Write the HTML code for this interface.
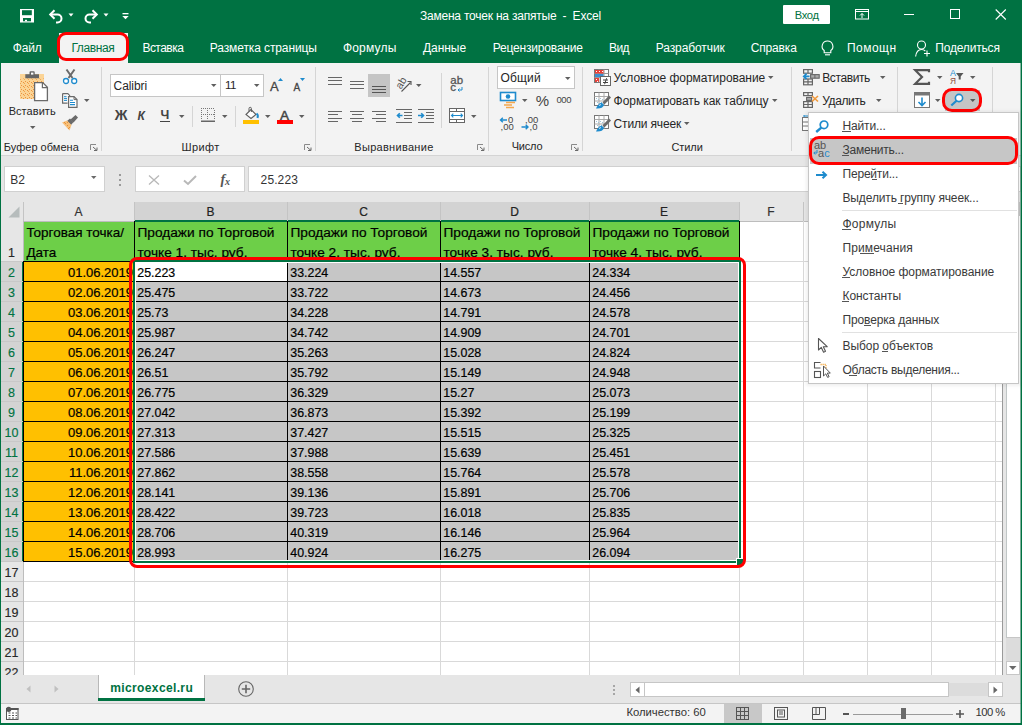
<!DOCTYPE html><html><head><meta charset="utf-8"><style>
html,body{margin:0;padding:0;width:1022px;height:725px;overflow:hidden;position:relative;font-family:"Liberation Sans",sans-serif}
svg{overflow:visible}
</style></head><body>
<div style="position:absolute;left:0px;top:0px;width:1022px;height:725px;background:#e6e6e6"></div>
<div style="position:absolute;left:0px;top:0px;width:1022px;height:63px;background:#007242"></div>
<div style="position:absolute;left:1px;top:63px;width:1020px;height:92px;background:#f3f3f3"></div>
<div style="position:absolute;left:1px;top:155px;width:1020px;height:1px;background:#d4d4d4"></div>
<svg style="position:absolute;left:20px;top:9px;" width="14" height="14" viewBox="0 0 14 14"><rect x="0" y="0" width="14" height="13.5" fill="#fff"/><rect x="2" y="1.2" width="9.8" height="5" fill="#007242"/><rect x="3" y="9" width="8" height="3.3" fill="#007242"/><rect x="5" y="10.8" width="2" height="1.5" fill="#fff"/></svg>
<svg style="position:absolute;left:48px;top:8px;" width="16" height="15" viewBox="0 0 16 15"><path d="M2.5 6.5h7a4 4 0 0 1 0 8h-1.5" fill="none" stroke="#fff" stroke-width="2"/><path d="M6.5 2.2L2.2 6.5L6.5 10.8" fill="none" stroke="#fff" stroke-width="2"/></svg>
<svg style="position:absolute;left:68px;top:13px;" width="6" height="5" viewBox="0 0 6 5"><path d="M0.5 0.5h5l-2.5 3z" fill="#fff"/></svg>
<svg style="position:absolute;left:83px;top:8px;" width="16" height="15" viewBox="0 0 16 15"><path d="M13.5 6.5h-7a4 4 0 0 0 0 8h1.5" fill="none" stroke="#fff" stroke-width="2"/><path d="M9.5 2.2L13.8 6.5L9.5 10.8" fill="none" stroke="#fff" stroke-width="2"/></svg>
<svg style="position:absolute;left:103px;top:13px;" width="6" height="5" viewBox="0 0 6 5"><path d="M0.5 0.5h5l-2.5 3z" fill="#fff"/></svg>
<svg style="position:absolute;left:122px;top:12px;" width="7" height="8" viewBox="0 0 7 8"><rect x="0.5" y="1" width="6" height="1.3" fill="#fff"/><path d="M0.3 4h6.4l-3.2 3.2z" fill="#fff"/></svg>
<div style="position:absolute;left:419.9px;top:10px;font-family:'Liberation Sans',sans-serif;font-size:12px;line-height:12px;letter-spacing:-0.213px;font-weight:400;color:#fff;white-space:pre;">Замена точек на запятые  -  Excel</div>
<div style="position:absolute;left:783px;top:5px;width:47px;height:19px;background:#fff;border-radius:1px"></div>
<div style="position:absolute;left:794.7px;top:10px;font-family:'Liberation Sans',sans-serif;font-size:11.2px;line-height:11.2px;letter-spacing:-0.335px;font-weight:400;color:#007242;white-space:pre;">Вход</div>
<svg style="position:absolute;left:855px;top:9px;" width="15" height="11" viewBox="0 0 15 11"><rect x="0.5" y="0.5" width="13" height="9.5" fill="none" stroke="#fff"/><path d="M1 2.5h12" stroke="#fff"/><path d="M7 9V4.5M5 6.5l2-2 2 2" fill="none" stroke="#fff"/></svg>
<div style="position:absolute;left:904px;top:14px;width:10px;height:1px;background:#fff"></div>
<div style="position:absolute;left:950px;top:9px;width:10px;height:10px;border:1px solid #fff;box-sizing:border-box"></div>
<svg style="position:absolute;left:995px;top:9px;" width="12" height="11" viewBox="0 0 12 11"><path d="M0.7 0.5L10.8 10.5M10.8 0.5L0.7 10.5" stroke="#fff" stroke-width="1.1"/></svg>
<div style="position:absolute;left:12.7px;top:42px;font-family:'Liberation Sans',sans-serif;font-size:12px;line-height:12px;letter-spacing:-0.126px;font-weight:400;color:#fff;white-space:pre;">Файл</div>
<div style="position:absolute;left:142.4px;top:42px;font-family:'Liberation Sans',sans-serif;font-size:12px;line-height:12px;letter-spacing:-0.515px;font-weight:400;color:#fff;white-space:pre;">Вставка</div>
<div style="position:absolute;left:209.8px;top:42px;font-family:'Liberation Sans',sans-serif;font-size:12px;line-height:12px;letter-spacing:-0.11px;font-weight:400;color:#fff;white-space:pre;">Разметка страницы</div>
<div style="position:absolute;left:342.9px;top:42px;font-family:'Liberation Sans',sans-serif;font-size:12px;line-height:12px;letter-spacing:0.197px;font-weight:400;color:#fff;white-space:pre;">Формулы</div>
<div style="position:absolute;left:423px;top:42px;font-family:'Liberation Sans',sans-serif;font-size:12px;line-height:12px;letter-spacing:-0.059px;font-weight:400;color:#fff;white-space:pre;">Данные</div>
<div style="position:absolute;left:492.8px;top:42px;font-family:'Liberation Sans',sans-serif;font-size:12px;line-height:12px;letter-spacing:-0.19px;font-weight:400;color:#fff;white-space:pre;">Рецензирование</div>
<div style="position:absolute;left:609px;top:42px;font-family:'Liberation Sans',sans-serif;font-size:12px;line-height:12px;letter-spacing:-0.57px;font-weight:400;color:#fff;white-space:pre;">Вид</div>
<div style="position:absolute;left:655.7px;top:42px;font-family:'Liberation Sans',sans-serif;font-size:12px;line-height:12px;letter-spacing:-0.089px;font-weight:400;color:#fff;white-space:pre;">Разработчик</div>
<div style="position:absolute;left:750.7px;top:42px;font-family:'Liberation Sans',sans-serif;font-size:12px;line-height:12px;letter-spacing:-0.154px;font-weight:400;color:#fff;white-space:pre;">Справка</div>
<div style="position:absolute;left:846.9px;top:42px;font-family:'Liberation Sans',sans-serif;font-size:12px;line-height:12px;letter-spacing:0.479px;font-weight:400;color:#fff;white-space:pre;">Помощн</div>
<div style="position:absolute;left:935.3px;top:42px;font-family:'Liberation Sans',sans-serif;font-size:12px;line-height:12px;letter-spacing:-0.186px;font-weight:400;color:#fff;white-space:pre;">Поделиться</div>
<div style="position:absolute;left:59px;top:33px;width:69px;height:30px;background:#f3f3f3"></div>
<div style="position:absolute;left:71.4px;top:42px;font-family:'Liberation Sans',sans-serif;font-size:12px;line-height:12px;letter-spacing:-0.382px;font-weight:400;color:#007242;white-space:pre;">Главная</div>
<div style="position:absolute;left:57px;top:32px;width:72px;height:29px;border:3px solid #f00;border-radius:9px;box-sizing:border-box"></div>
<svg style="position:absolute;left:821px;top:40px;" width="13" height="17" viewBox="0 0 13 17"><path d="M6.5 1a5.3 5.3 0 0 0-3.3 9.5v2.3h6.6v-2.3A5.3 5.3 0 0 0 6.5 1z" fill="none" stroke="#fff" stroke-width="1.1"/><path d="M4 14.8h5" stroke="#fff" stroke-width="1.1"/></svg>
<svg style="position:absolute;left:915px;top:40px;" width="16" height="17" viewBox="0 0 16 17"><circle cx="6.5" cy="5" r="4" fill="none" stroke="#fff" stroke-width="1.1"/><path d="M0.6 16.5C1.2 12 3.5 9.5 6.5 9.5c1.5 0 2.8 0.5 3.8 1.5" fill="none" stroke="#fff" stroke-width="1.1"/><path d="M12 10.5v6M9 13.5h6" stroke="#fff" stroke-width="1.1"/></svg>
<svg style="position:absolute;left:19px;top:70px;" width="30" height="32" viewBox="0 0 30 32"><defs><pattern id="dots" width="4" height="4" patternUnits="userSpaceOnUse"><rect width="4" height="4" fill="#fbd496"/><rect x="0" y="0" width="1" height="1" fill="#ec9440"/><rect x="1" y="1" width="1" height="1" fill="#f0a552"/><rect x="2" y="3" width="1" height="1" fill="#ec9440"/></pattern></defs>
<rect x="1" y="4" width="24" height="25" fill="url(#dots)"/>
<rect x="1" y="4" width="24" height="4.5" fill="#fbd496"/>
<path d="M6.3 8.2V4.3h4.2V2.2a1 1 0 0 1 1-1h3.2a1 1 0 0 1 1 1V4.3h4.3v3.9z" fill="#666"/>
<rect x="12" y="2.6" width="2.4" height="2" fill="#fff"/>
<path d="M15.6 12.6h8.2l4.6 4.6v13.4h-12.8z" fill="#fff" stroke="#6a6a6a" stroke-width="1.3"/>
<path d="M23.4 12.6v5h5" fill="none" stroke="#6a6a6a" stroke-width="1.2"/></svg>
<div style="position:absolute;left:8.7px;top:106px;font-family:'Liberation Sans',sans-serif;font-size:11px;line-height:11px;letter-spacing:0.047px;font-weight:400;color:#262626;white-space:pre;">Вставить</div>
<svg style="position:absolute;left:30px;top:126px;" width="6" height="4" viewBox="0 0 6 4"><path d="M0 0h5.5l-2.75 3z" fill="#5f5f5f"/></svg>
<svg style="position:absolute;left:62px;top:68px;" width="17" height="17" viewBox="0 0 17 17"><path d="M4.5 1.5L10.5 10M12.5 1.5L6.5 10" stroke="#6a6a6a" stroke-width="2"/><circle cx="4" cy="13" r="2.5" fill="#fff" stroke="#1e8bcd" stroke-width="1.3"/><circle cx="12.2" cy="13" r="2.5" fill="#fff" stroke="#1e8bcd" stroke-width="1.3"/></svg>
<svg style="position:absolute;left:62px;top:93px;" width="16" height="15" viewBox="0 0 16 15"><path d="M0.6 0.6h5.2l1.8 1.8v1.6M0.6 0.6v9.6h5" fill="#fff" stroke="#6a6a6a" stroke-width="1.2"/><path d="M6.6 3.6h5.4l3 3v7.8h-8.4z" fill="#fff" stroke="#6a6a6a" stroke-width="1.2"/><path d="M12 3.6v3h3" fill="none" stroke="#6a6a6a" stroke-width="1"/><path d="M2 3.7h2.5M2 5.6h3M2 7.4h3" stroke="#1e8bcd" stroke-width="1"/><path d="M8 7.2h3M8 9.5h5M8 11.6h5" stroke="#1e8bcd" stroke-width="1.1"/></svg>
<svg style="position:absolute;left:84px;top:99px;" width="6" height="4" viewBox="0 0 6 4"><path d="M0 0h5.5l-2.75 3z" fill="#5f5f5f"/></svg>
<svg style="position:absolute;left:61px;top:114px;" width="18" height="17" viewBox="0 0 18 17"><path d="M9.5 5.5l5-4.5 2.5 2.5-4.5 5z" fill="#6a6a6a"/><path d="M6 7l3-2.5 3.5 3.5-2.5 3z" fill="#6a6a6a"/><path d="M1 8.5l5-2 4.5 4.5-2 5.5z" fill="#f7c07a"/><g fill="#e8913a"><rect x="4" y="9" width="1" height="1"/><rect x="6" y="11" width="1" height="1"/><rect x="8" y="13" width="1" height="1"/><rect x="6" y="8" width="1" height="1"/><rect x="3" y="8" width="1" height="1"/><rect x="7" y="14" width="1" height="1"/></g></svg>
<div style="position:absolute;left:3.8px;top:142px;font-family:'Liberation Sans',sans-serif;font-size:11px;line-height:11px;letter-spacing:0.021px;font-weight:400;color:#262626;white-space:pre;">Буфер обмена</div>
<svg style="position:absolute;left:90px;top:144px;" width="8" height="7" viewBox="0 0 8 7"><path d="M0.5 6V0.5H6" fill="none" stroke="#8a8a8a"/><path d="M3 3l4 3.5M7 3.5v3H4" fill="none" stroke="#6a6a6a"/></svg>
<div style="position:absolute;left:101px;top:67px;width:1px;height:84px;background:#d5d5d5"></div>
<div style="position:absolute;left:110px;top:74px;width:111px;height:23px;background:#fff;border:1px solid #c6c6c6;box-sizing:border-box"></div>
<div style="position:absolute;left:220px;top:74px;width:44px;height:23px;background:#fff;border:1px solid #c6c6c6;box-sizing:border-box"></div>
<div style="position:absolute;left:113.6px;top:80px;font-family:'Liberation Sans',sans-serif;font-size:12px;line-height:12px;letter-spacing:-0.087px;font-weight:400;color:#262626;white-space:pre;">Calibri</div>
<svg style="position:absolute;left:211px;top:84px;" width="6" height="4" viewBox="0 0 6 4"><path d="M0 0h5.5l-2.75 3z" fill="#5f5f5f"/></svg>
<div style="position:absolute;left:225px;top:80px;font-family:'Liberation Sans',sans-serif;font-size:11.5px;line-height:11.5px;letter-spacing:0px;font-weight:400;color:#262626;white-space:pre;letter-spacing:-0.6px">11</div>
<svg style="position:absolute;left:254px;top:84px;" width="6" height="4" viewBox="0 0 6 4"><path d="M0 0h5.5l-2.75 3z" fill="#5f5f5f"/></svg>
<div style="position:absolute;left:270px;top:80px;font-family:'Liberation Sans',sans-serif;font-size:13px;line-height:13px;letter-spacing:0px;font-weight:400;color:#444;white-space:pre;-webkit-text-stroke:0.3px #444">A</div>
<svg style="position:absolute;left:278px;top:78px;" width="6" height="4" viewBox="0 0 6 4"><path d="M0 3h5l-2.5-3z" fill="#1e8bcd"/></svg>
<div style="position:absolute;left:293.5px;top:83px;font-family:'Liberation Sans',sans-serif;font-size:10px;line-height:10px;letter-spacing:0px;font-weight:400;color:#444;white-space:pre;-webkit-text-stroke:0.3px #444">A</div>
<svg style="position:absolute;left:300px;top:78px;" width="6" height="4" viewBox="0 0 6 4"><path d="M0 0h5l-2.5 3z" fill="#1e8bcd"/></svg>
<div style="position:absolute;left:114.7px;top:108px;font-family:'Liberation Sans',sans-serif;font-size:14.05px;line-height:14.05px;letter-spacing:0px;font-weight:700;color:#444;white-space:pre;">Ж</div>
<div style="position:absolute;left:137.5px;top:110px;font-family:'Liberation Sans',sans-serif;font-size:12px;line-height:12px;letter-spacing:0px;font-weight:700;color:#444;white-space:pre;font-style:italic">К</div>
<div style="position:absolute;left:160.4px;top:109px;font-family:'Liberation Sans',sans-serif;font-size:12.5px;line-height:12.5px;letter-spacing:0px;font-weight:700;color:#444;white-space:pre;">Ч</div>
<div style="position:absolute;left:160px;top:121px;width:10px;height:1px;background:#444"></div>
<svg style="position:absolute;left:179px;top:115px;" width="6" height="4" viewBox="0 0 6 4"><path d="M0 0h5.5l-2.75 3z" fill="#5f5f5f"/></svg>
<div style="position:absolute;left:192px;top:106px;width:1px;height:21px;background:#d5d5d5"></div>
<svg style="position:absolute;left:201px;top:108px;" width="14" height="14" viewBox="0 0 14 14"><g fill="#777"><rect x="0" y="0" width="1" height="1"/><rect x="0" y="6" width="1" height="1"/><rect x="2" y="0" width="1" height="1"/><rect x="2" y="6" width="1" height="1"/><rect x="4" y="0" width="1" height="1"/><rect x="4" y="6" width="1" height="1"/><rect x="6" y="0" width="1" height="1"/><rect x="6" y="6" width="1" height="1"/><rect x="8" y="0" width="1" height="1"/><rect x="8" y="6" width="1" height="1"/><rect x="10" y="0" width="1" height="1"/><rect x="10" y="6" width="1" height="1"/><rect x="12" y="0" width="1" height="1"/><rect x="12" y="6" width="1" height="1"/><rect x="0" y="2" width="1" height="1"/><rect x="0" y="4" width="1" height="1"/><rect x="0" y="6" width="1" height="1"/><rect x="0" y="8" width="1" height="1"/><rect x="0" y="10" width="1" height="1"/><rect x="6" y="2" width="1" height="1"/><rect x="6" y="4" width="1" height="1"/><rect x="6" y="6" width="1" height="1"/><rect x="6" y="8" width="1" height="1"/><rect x="6" y="10" width="1" height="1"/><rect x="13" y="2" width="1" height="1"/><rect x="13" y="4" width="1" height="1"/><rect x="13" y="6" width="1" height="1"/><rect x="13" y="8" width="1" height="1"/><rect x="13" y="10" width="1" height="1"/></g><rect x="0" y="12.5" width="14" height="1.5" fill="#666"/></svg>
<svg style="position:absolute;left:222px;top:115px;" width="6" height="4" viewBox="0 0 6 4"><path d="M0 0h5.5l-2.75 3z" fill="#5f5f5f"/></svg>
<div style="position:absolute;left:235px;top:106px;width:1px;height:21px;background:#d5d5d5"></div>
<svg style="position:absolute;left:243.5px;top:107px;" width="15" height="13" viewBox="0 0 15 13"><path d="M2 7.5L7 2.5l5 5-5 4z" fill="#fff" stroke="#5f5f5f" stroke-width="1.1"/><path d="M5 4.5V1.5a1.2 1.2 0 0 1 2.4 0V5" fill="none" stroke="#5f5f5f"/><path d="M12.5 6.5c1.5 1 1.5 3 1 4.5" stroke="#1e8bcd" stroke-width="2" fill="none"/></svg>
<div style="position:absolute;left:243px;top:120px;width:16px;height:4px;background:#ffc000"></div>
<svg style="position:absolute;left:265px;top:115px;" width="6" height="4" viewBox="0 0 6 4"><path d="M0 0h5.5l-2.75 3z" fill="#5f5f5f"/></svg>
<div style="position:absolute;left:280px;top:109px;font-family:'Liberation Sans',sans-serif;font-size:13.5px;line-height:13.5px;letter-spacing:0px;font-weight:400;color:#444;white-space:pre;-webkit-text-stroke:0.5px #444">A</div>
<div style="position:absolute;left:277px;top:120px;width:16px;height:4px;background:#f00"></div>
<svg style="position:absolute;left:299px;top:115px;" width="6" height="4" viewBox="0 0 6 4"><path d="M0 0h5.5l-2.75 3z" fill="#5f5f5f"/></svg>
<div style="position:absolute;left:181.5px;top:142px;font-family:'Liberation Sans',sans-serif;font-size:11px;line-height:11px;letter-spacing:0.402px;font-weight:400;color:#262626;white-space:pre;">Шрифт</div>
<svg style="position:absolute;left:304px;top:144px;" width="8" height="7" viewBox="0 0 8 7"><path d="M0.5 6V0.5H6" fill="none" stroke="#8a8a8a"/><path d="M3 3l4 3.5M7 3.5v3H4" fill="none" stroke="#6a6a6a"/></svg>
<div style="position:absolute;left:315px;top:67px;width:1px;height:84px;background:#d5d5d5"></div>
<div style="position:absolute;left:328px;top:77px;width:14px;height:1px;background:#666"></div>
<div style="position:absolute;left:328px;top:80px;width:14px;height:1px;background:#666"></div>
<div style="position:absolute;left:328px;top:84px;width:14px;height:1px;background:#666"></div>
<div style="position:absolute;left:350px;top:81px;width:14px;height:1px;background:#666"></div>
<div style="position:absolute;left:350px;top:84px;width:14px;height:1px;background:#666"></div>
<div style="position:absolute;left:350px;top:88px;width:14px;height:1px;background:#666"></div>
<div style="position:absolute;left:368px;top:74px;width:22px;height:23px;background:#c5c5c5"></div>
<div style="position:absolute;left:372px;top:86px;width:14px;height:1px;background:#555"></div>
<div style="position:absolute;left:372px;top:89px;width:14px;height:1px;background:#555"></div>
<div style="position:absolute;left:372px;top:92px;width:14px;height:1px;background:#555"></div>
<svg style="position:absolute;left:395px;top:76px;" width="19" height="17" viewBox="0 0 19 17"><text x="0" y="11" font-size="10.5" font-family="Liberation Sans" fill="#555" transform="rotate(-58 5.5 7)">ab</text><path d="M6.5 15.5L15.5 6.5" stroke="#555" stroke-width="1.1"/><path d="M12.5 5.5h3.5v3.5" fill="none" stroke="#555" stroke-width="1.1"/></svg>
<svg style="position:absolute;left:416px;top:84px;" width="6" height="4" viewBox="0 0 6 4"><path d="M0 0h5.5l-2.75 3z" fill="#5f5f5f"/></svg>
<div style="position:absolute;left:441px;top:73px;width:1px;height:55px;background:#d5d5d5"></div>
<div style="position:absolute;left:450.3px;top:75px;font-family:'Liberation Sans',sans-serif;font-size:11.5px;line-height:11.5px;letter-spacing:0px;font-weight:400;color:#555;white-space:pre;-webkit-text-stroke:0.3px #555">ab</div>
<div style="position:absolute;left:450.3px;top:82px;font-family:'Liberation Sans',sans-serif;font-size:11.5px;line-height:11.5px;letter-spacing:0px;font-weight:400;color:#555;white-space:pre;-webkit-text-stroke:0.3px #555">c</div>
<svg style="position:absolute;left:457px;top:87px;" width="6" height="5" viewBox="0 0 6 5"><path d="M5 0v3H1M2.5 1.5L1 3l1.5 1.5" fill="none" stroke="#1e8bcd"/></svg>
<div style="position:absolute;left:328px;top:111px;width:14px;height:1px;background:#666"></div>
<div style="position:absolute;left:328px;top:114px;width:10px;height:1px;background:#666"></div>
<div style="position:absolute;left:328px;top:118px;width:14px;height:1px;background:#666"></div>
<div style="position:absolute;left:328px;top:121px;width:10px;height:1px;background:#666"></div>
<div style="position:absolute;left:350px;top:111px;width:14px;height:1px;background:#666"></div>
<div style="position:absolute;left:352px;top:114px;width:10px;height:1px;background:#666"></div>
<div style="position:absolute;left:350px;top:118px;width:14px;height:1px;background:#666"></div>
<div style="position:absolute;left:352px;top:121px;width:10px;height:1px;background:#666"></div>
<div style="position:absolute;left:372px;top:111px;width:14px;height:1px;background:#666"></div>
<div style="position:absolute;left:376px;top:114px;width:10px;height:1px;background:#666"></div>
<div style="position:absolute;left:372px;top:118px;width:14px;height:1px;background:#666"></div>
<div style="position:absolute;left:376px;top:121px;width:10px;height:1px;background:#666"></div>
<svg style="position:absolute;left:396px;top:109px;" width="16" height="14" viewBox="0 0 16 14"><path d="M0 0.5h16M8 3.5h8M8 6.5h8M8 9.5h8M0 13.5h16" stroke="#666"/><path d="M6.5 6.5H1.5M3.8 4.2L1.5 6.5l2.3 2.3" fill="none" stroke="#1e8bcd" stroke-width="1.6"/></svg>
<svg style="position:absolute;left:418px;top:109px;" width="16" height="14" viewBox="0 0 16 14"><path d="M0 0.5h16M8 3.5h8M8 6.5h8M8 9.5h8M0 13.5h16" stroke="#666"/><path d="M0 6.5h5.5M3.2 4.2L5.5 6.5 3.2 8.8" fill="none" stroke="#1e8bcd" stroke-width="1.6"/></svg>
<svg style="position:absolute;left:449px;top:108px;" width="16" height="15" viewBox="0 0 16 15"><rect x="0.5" y="0.5" width="15" height="14" fill="#fff" stroke="#666"/><path d="M0.5 3.5h15M0.5 11.5h15M7.5 0.5v3M7.5 11.5v3" stroke="#666"/><path d="M2.5 7.5h11M4.3 5.7L2.5 7.5l1.8 1.8M11.7 5.7l1.8 1.8-1.8 1.8" fill="none" stroke="#1e8bcd" stroke-width="1.1"/></svg>
<svg style="position:absolute;left:471px;top:115px;" width="6" height="4" viewBox="0 0 6 4"><path d="M0 0h5.5l-2.75 3z" fill="#5f5f5f"/></svg>
<div style="position:absolute;left:354.3px;top:142px;font-family:'Liberation Sans',sans-serif;font-size:11px;line-height:11px;letter-spacing:0.299px;font-weight:400;color:#262626;white-space:pre;">Выравнивание</div>
<svg style="position:absolute;left:477px;top:144px;" width="8" height="7" viewBox="0 0 8 7"><path d="M0.5 6V0.5H6" fill="none" stroke="#8a8a8a"/><path d="M3 3l4 3.5M7 3.5v3H4" fill="none" stroke="#6a6a6a"/></svg>
<div style="position:absolute;left:488px;top:67px;width:1px;height:84px;background:#d5d5d5"></div>
<div style="position:absolute;left:497px;top:66px;width:78px;height:23px;background:#fff;border:1px solid #c6c6c6;box-sizing:border-box"></div>
<div style="position:absolute;left:500.4px;top:72px;font-family:'Liberation Sans',sans-serif;font-size:12px;line-height:12px;letter-spacing:0.183px;font-weight:400;color:#262626;white-space:pre;">Общий</div>
<svg style="position:absolute;left:565px;top:77px;" width="6" height="4" viewBox="0 0 6 4"><path d="M0 0h5.5l-2.75 3z" fill="#5f5f5f"/></svg>
<svg style="position:absolute;left:500px;top:92px;" width="17" height="17" viewBox="0 0 17 17"><rect x="0.5" y="0.5" width="15" height="8" fill="#fff" stroke="#1e8bcd" stroke-width="1.6"/><circle cx="8" cy="4.5" r="2.3" fill="#1e8bcd"/><path d="M6 10.5h9M4 13h8M6 15.5h8" stroke="#f5a84e" stroke-width="1.4"/></svg>
<svg style="position:absolute;left:522px;top:99px;" width="6" height="4" viewBox="0 0 6 4"><path d="M0 0h5.5l-2.75 3z" fill="#5f5f5f"/></svg>
<div style="position:absolute;left:535.8px;top:93px;font-family:'Liberation Sans',sans-serif;font-size:15px;line-height:15px;letter-spacing:0px;font-weight:400;color:#444;white-space:pre;">%</div>
<div style="position:absolute;left:556.5px;top:95px;font-family:'Liberation Sans',sans-serif;font-size:9.5px;line-height:9.5px;letter-spacing:-0.417px;font-weight:400;color:#444;white-space:pre;">000</div>
<svg style="position:absolute;left:499px;top:115px;" width="17" height="16" viewBox="0 0 17 16"><text x="9" y="8" font-size="9.5" font-family="Liberation Sans" fill="#444">0</text><text x="1.5" y="15" font-size="9.5" font-family="Liberation Sans" fill="#444">,00</text><path d="M8 5H1.5M3.8 2.7L1.5 5l2.3 2.3" fill="none" stroke="#1e8bcd" stroke-width="1.4"/></svg>
<svg style="position:absolute;left:521px;top:115px;" width="17" height="16" viewBox="0 0 17 16"><text x="4" y="8" font-size="9.5" font-family="Liberation Sans" fill="#444">,00</text><text x="8.5" y="15" font-size="9.5" font-family="Liberation Sans" fill="#444">,0</text><path d="M0.5 12h6.5M4.7 9.7L7 12l-2.3 2.3" fill="none" stroke="#1e8bcd" stroke-width="1.4"/></svg>
<div style="position:absolute;left:511.7px;top:141px;font-family:'Liberation Sans',sans-serif;font-size:11px;line-height:11px;letter-spacing:-0.187px;font-weight:400;color:#262626;white-space:pre;">Число</div>
<svg style="position:absolute;left:571px;top:144px;" width="8" height="7" viewBox="0 0 8 7"><path d="M0.5 6V0.5H6" fill="none" stroke="#8a8a8a"/><path d="M3 3l4 3.5M7 3.5v3H4" fill="none" stroke="#6a6a6a"/></svg>
<div style="position:absolute;left:582px;top:67px;width:1px;height:84px;background:#d5d5d5"></div>
<svg style="position:absolute;left:594px;top:69px;" width="17" height="17" viewBox="0 0 17 17"><rect x="0.5" y="0.5" width="14" height="13" fill="#fff" stroke="#777"/>
<path d="M0.5 4.5h14M0.5 8.5h14M5 0.5v13M10 0.5v13" stroke="#999"/>
<rect x="1" y="1" width="8.5" height="3.5" fill="#e8413a"/><g fill="#fff"><rect x="2" y="2" width="1" height="1"/><rect x="5" y="2" width="1" height="1"/><rect x="8" y="2" width="1" height="1"/></g>
<rect x="1" y="5" width="8.5" height="3" fill="#3b8fd0"/>
<rect x="1" y="9" width="4" height="4" fill="#e8413a"/><g fill="#fff"><rect x="2" y="10" width="1" height="1"/><rect x="3" y="12" width="1" height="1"/></g>
<rect x="6.5" y="7.5" width="10" height="9" fill="#fff" stroke="#666"/><path d="M9 11h5M9 13.5h5M12.6 9.2l-2 6" stroke="#444" stroke-width="1"/></svg>
<div style="position:absolute;left:613.6px;top:72px;font-family:'Liberation Sans',sans-serif;font-size:12px;line-height:12px;letter-spacing:-0.046px;font-weight:400;color:#262626;white-space:pre;">Условное форматирование</div>
<svg style="position:absolute;left:768px;top:76px;" width="6" height="4" viewBox="0 0 6 4"><path d="M0 0h5.5l-2.75 3z" fill="#5f5f5f"/></svg>
<svg style="position:absolute;left:594px;top:92px;" width="17" height="17" viewBox="0 0 17 17"><rect x="0.5" y="0.5" width="14" height="13" fill="#fff" stroke="#777"/><path d="M0.5 4.5h14M0.5 9h14M5 0.5v13M10 0.5v13" stroke="#aaa"/>
<g fill="#9fc4d8"><rect x="2" y="6" width="1" height="1"/><rect x="4" y="7" width="1" height="1"/><rect x="6" y="6" width="1" height="1"/><rect x="3" y="10" width="1" height="1"/><rect x="7" y="10" width="1" height="1"/><rect x="8" y="7" width="1" height="1"/></g>
<path d="M8.5 10.5l6.5-7 2 2-6.5 7z" fill="#6a6a6a"/><path d="M2 16.5c1-2.5 2.5-5 5.5-6l2.5 2.3c-1 3-3.5 4-8 3.7z" fill="#1e8bcd"/><path d="M5 13.5l2-1" stroke="#fff" stroke-width="0.8"/></svg>
<svg style="position:absolute;left:594px;top:115px;" width="17" height="17" viewBox="0 0 17 17"><rect x="0.5" y="0.5" width="14" height="13" fill="#fff" stroke="#777"/><path d="M0.5 4.5h14M0.5 9h14M5 0.5v13M10 0.5v13" stroke="#aaa"/>
<g fill="#9fc4d8"><rect x="2" y="6" width="1" height="1"/><rect x="4" y="7" width="1" height="1"/><rect x="6" y="6" width="1" height="1"/><rect x="3" y="10" width="1" height="1"/><rect x="7" y="10" width="1" height="1"/><rect x="8" y="7" width="1" height="1"/></g>
<path d="M8.5 10.5l6.5-7 2 2-6.5 7z" fill="#6a6a6a"/><path d="M2 16.5c1-2.5 2.5-5 5.5-6l2.5 2.3c-1 3-3.5 4-8 3.7z" fill="#1e8bcd"/><path d="M5 13.5l2-1" stroke="#fff" stroke-width="0.8"/></svg>
<div style="position:absolute;left:613.6px;top:95px;font-family:'Liberation Sans',sans-serif;font-size:12px;line-height:12px;letter-spacing:-0.053px;font-weight:400;color:#262626;white-space:pre;">Форматировать как таблицу</div>
<svg style="position:absolute;left:772px;top:99px;" width="6" height="4" viewBox="0 0 6 4"><path d="M0 0h5.5l-2.75 3z" fill="#5f5f5f"/></svg>
<div style="position:absolute;left:613.6px;top:118px;font-family:'Liberation Sans',sans-serif;font-size:12px;line-height:12px;letter-spacing:-0.168px;font-weight:400;color:#262626;white-space:pre;">Стили ячеек</div>
<svg style="position:absolute;left:684px;top:122px;" width="6" height="4" viewBox="0 0 6 4"><path d="M0 0h5.5l-2.75 3z" fill="#5f5f5f"/></svg>
<div style="position:absolute;left:671.5px;top:142px;font-family:'Liberation Sans',sans-serif;font-size:11px;line-height:11px;letter-spacing:-0.098px;font-weight:400;color:#262626;white-space:pre;">Стили</div>
<div style="position:absolute;left:791px;top:67px;width:1px;height:84px;background:#d5d5d5"></div>
<svg style="position:absolute;left:802px;top:68px;" width="18" height="18" viewBox="0 0 18 18"><g fill="none" stroke="#666" stroke-width="1.2"><rect x="1.6" y="1.6" width="8.8" height="3.6"/><path d="M6 1.6v3.6"/><rect x="1.6" y="11" width="8.8" height="5.8"/><path d="M6 11v5.8M1.6 13.9h8.8"/></g>
<rect x="8.6" y="6.6" width="8.6" height="3.6" fill="#aaa" stroke="#666" stroke-width="1.1"/><path d="M12.9 6.6v3.6" stroke="#666"/>
<path d="M7.5 8.4H2M4.6 5.6L1.8 8.4l2.8 2.8" fill="none" stroke="#1e8bcd" stroke-width="1.8"/></svg>
<div style="position:absolute;left:822.2px;top:72px;font-family:'Liberation Sans',sans-serif;font-size:12px;line-height:12px;letter-spacing:-0.383px;font-weight:400;color:#262626;white-space:pre;">Вставить</div>
<svg style="position:absolute;left:880px;top:76px;" width="6" height="4" viewBox="0 0 6 4"><path d="M0 0h5.5l-2.75 3z" fill="#5f5f5f"/></svg>
<svg style="position:absolute;left:802px;top:91px;" width="18" height="18" viewBox="0 0 18 18"><g fill="none" stroke="#666" stroke-width="1.2"><rect x="1.6" y="1.6" width="8.8" height="3"/><path d="M6 1.6v3"/><rect x="1.6" y="10.6" width="8.8" height="5.8"/><path d="M6 10.6v5.8M1.6 13.5h8.8"/></g>
<rect x="4.6" y="6.4" width="5" height="3" fill="#aaa" stroke="#666" stroke-width="1.1"/>
<path d="M10 5l6 5.5M16 5l-6 5.5" stroke="#f0983a" stroke-width="1.6"/></svg>
<div style="position:absolute;left:822.2px;top:95px;font-family:'Liberation Sans',sans-serif;font-size:12px;line-height:12px;letter-spacing:-0.374px;font-weight:400;color:#262626;white-space:pre;">Удалить</div>
<svg style="position:absolute;left:876px;top:99px;" width="6" height="4" viewBox="0 0 6 4"><path d="M0 0h5.5l-2.75 3z" fill="#5f5f5f"/></svg>
<svg style="position:absolute;left:802px;top:115px;" width="18" height="16" viewBox="0 0 18 16"><rect x="0.5" y="2.5" width="14" height="13" fill="#fff" stroke="#777"/><path d="M0.5 7h14M0.5 11h14M7 2.5v13" stroke="#777"/><path d="M2 1h5M2 0v2M7 0v2" stroke="#1e8bcd"/></svg>
<div style="position:absolute;left:897px;top:67px;width:1px;height:84px;background:#d5d5d5"></div>
<svg style="position:absolute;left:914px;top:69px;" width="16" height="16" viewBox="0 0 16 16"><path d="M15 3.2V1.2H1.2L8 8 1.2 14.8H15v-2" fill="none" stroke="#555" stroke-width="2.2" stroke-linejoin="miter"/></svg>
<svg style="position:absolute;left:937px;top:76px;" width="6" height="4" viewBox="0 0 6 4"><path d="M0 0h5.5l-2.75 3z" fill="#5f5f5f"/></svg>
<div style="position:absolute;left:950px;top:69px;font-family:'Liberation Sans',sans-serif;font-size:9.0px;line-height:9.0px;letter-spacing:0px;font-weight:400;color:#1e8bcd;white-space:pre;">A</div>
<div style="position:absolute;left:950px;top:77px;font-family:'Liberation Sans',sans-serif;font-size:8.31px;line-height:8.31px;letter-spacing:0px;font-weight:400;color:#8b4a3a;white-space:pre;">Я</div>
<svg style="position:absolute;left:956px;top:73px;" width="8" height="7" viewBox="0 0 8 7"><path d="M0 0h7.5l-2.8 3.5v3h-2v-3z" fill="#555"/></svg>
<svg style="position:absolute;left:970px;top:76px;" width="6" height="4" viewBox="0 0 6 4"><path d="M0 0h5.5l-2.75 3z" fill="#5f5f5f"/></svg>
<svg style="position:absolute;left:914px;top:92px;" width="16" height="16" viewBox="0 0 16 16"><rect x="0.5" y="0.5" width="15" height="15" fill="#fff" stroke="#777"/><rect x="0.5" y="0.5" width="15" height="3" fill="#777"/><path d="M8 5.5v8M4.5 10L8 13.5 11.5 10" fill="none" stroke="#1e8bcd" stroke-width="1.6"/></svg>
<svg style="position:absolute;left:935px;top:99px;" width="6" height="4" viewBox="0 0 6 4"><path d="M0 0h5.5l-2.75 3z" fill="#5f5f5f"/></svg>
<div style="position:absolute;left:945px;top:90px;width:35px;height:21px;background:#c5c5c5"></div>
<svg style="position:absolute;left:950px;top:92px;" width="14" height="15" viewBox="0 0 14 15"><circle cx="9" cy="6" r="3.6" fill="#fff" stroke="#1e8bcd" stroke-width="1.6"/><path d="M6.5 8.8L1.3 13.5" stroke="#1e8bcd" stroke-width="2.2"/></svg>
<svg style="position:absolute;left:970px;top:99px;" width="6" height="4" viewBox="0 0 6 4"><path d="M0 0h5.5l-2.75 3z" fill="#555"/></svg>
<div style="position:absolute;left:942px;top:88px;width:40px;height:24px;border:3px solid #f00;border-radius:10px;box-sizing:border-box"></div>
<div style="position:absolute;left:992px;top:67px;width:1px;height:84px;background:#d5d5d5"></div>
<div style="position:absolute;left:1px;top:156px;width:1020px;height:46px;background:#e6e6e6"></div>
<div style="position:absolute;left:3.5px;top:166px;width:101px;height:26px;background:#fff;border:1px solid #d0d0d0;box-sizing:border-box"></div>
<div style="position:absolute;left:10.3px;top:174px;font-family:'Liberation Sans',sans-serif;font-size:12px;line-height:12px;letter-spacing:0.01px;font-weight:400;color:#333;white-space:pre;">B2</div>
<svg style="position:absolute;left:91px;top:176px;" width="6" height="4" viewBox="0 0 6 4"><path d="M0 0h5.5l-2.75 3z" fill="#6a6a6a"/></svg>
<div style="position:absolute;left:119px;top:174px;width:2px;height:2px;background:#9a9a9a"></div>
<div style="position:absolute;left:119px;top:179px;width:2px;height:2px;background:#9a9a9a"></div>
<div style="position:absolute;left:119px;top:184px;width:2px;height:2px;background:#9a9a9a"></div>
<div style="position:absolute;left:135px;top:166px;width:110px;height:26px;background:#fff;border:1px solid #d0d0d0;box-sizing:border-box"></div>
<svg style="position:absolute;left:148px;top:175px;" width="12" height="10" viewBox="0 0 12 10"><path d="M1 0.5l10 9M11 0.5l-10 9" stroke="#b8b8b8" stroke-width="1.3"/></svg>
<svg style="position:absolute;left:183px;top:175px;" width="14" height="10" viewBox="0 0 14 10"><path d="M1 5.5l4 3.5L13 1" fill="none" stroke="#b8b8b8" stroke-width="2"/></svg>
<div style="position:absolute;left:220.5px;top:173px;font-family:'Liberation Serif',serif;font-size:14px;line-height:14px;letter-spacing:0px;font-weight:700;color:#555;white-space:pre;"><i>f</i></div>
<div style="position:absolute;left:225px;top:177px;font-family:'Liberation Serif',serif;font-size:10px;line-height:10px;letter-spacing:0px;font-weight:700;color:#555;white-space:pre;"><i>x</i></div>
<div style="position:absolute;left:248px;top:166px;width:773px;height:26px;background:#fff;border:1px solid #d0d0d0;box-sizing:border-box"></div>
<div style="position:absolute;left:260.6px;top:174px;font-family:'Liberation Sans',sans-serif;font-size:12px;line-height:12px;letter-spacing:0.116px;font-weight:400;color:#333;white-space:pre;">25.223</div>
<div style="position:absolute;left:1px;top:202px;width:1002px;height:473px;background:#fff"></div>
<div style="position:absolute;left:1px;top:202px;width:1002px;height:19px;background:#e6e6e6"></div>
<div style="position:absolute;left:135px;top:202px;width:604px;height:19px;background:#d3d3d3"></div>
<div style="position:absolute;left:1px;top:221px;width:1002px;height:1px;background:#bdbdbd"></div>
<div style="position:absolute;left:134px;top:220px;width:606px;height:2px;background:#007242"></div>
<div style="position:absolute;left:134px;top:202px;width:1px;height:19px;background:#c4c4c4"></div>
<div style="position:absolute;left:287px;top:202px;width:1px;height:19px;background:#c4c4c4"></div>
<div style="position:absolute;left:440px;top:202px;width:1px;height:19px;background:#c4c4c4"></div>
<div style="position:absolute;left:589px;top:202px;width:1px;height:19px;background:#c4c4c4"></div>
<div style="position:absolute;left:739px;top:202px;width:1px;height:19px;background:#c4c4c4"></div>
<div style="position:absolute;left:803px;top:202px;width:1px;height:19px;background:#c4c4c4"></div>
<div style="position:absolute;left:867px;top:202px;width:1px;height:19px;background:#c4c4c4"></div>
<div style="position:absolute;left:931px;top:202px;width:1px;height:19px;background:#c4c4c4"></div>
<div style="position:absolute;left:995px;top:202px;width:1px;height:19px;background:#c4c4c4"></div>
<svg style="position:absolute;left:8px;top:206px;" width="12" height="12" viewBox="0 0 12 12"><path d="M11.5 0.5V11.5H0.5z" fill="#b6bcbc"/></svg>
<div style="position:absolute;left:23px;top:202px;width:1px;height:19px;background:#c4c4c4"></div>
<div style="position:absolute;left:58.5px;top:206px;width:40px;text-align:center;font-size:12px;line-height:12px;color:#333;font-family:'Liberation Sans';-webkit-text-stroke:0.2px #333">A</div>
<div style="position:absolute;left:190.5px;top:206px;width:40px;text-align:center;font-size:12px;line-height:12px;color:#222;font-family:'Liberation Sans';-webkit-text-stroke:0.2px #222">B</div>
<div style="position:absolute;left:343.5px;top:206px;width:40px;text-align:center;font-size:12px;line-height:12px;color:#222;font-family:'Liberation Sans';-webkit-text-stroke:0.2px #222">C</div>
<div style="position:absolute;left:494.5px;top:206px;width:40px;text-align:center;font-size:12px;line-height:12px;color:#222;font-family:'Liberation Sans';-webkit-text-stroke:0.2px #222">D</div>
<div style="position:absolute;left:644.0px;top:206px;width:40px;text-align:center;font-size:12px;line-height:12px;color:#222;font-family:'Liberation Sans';-webkit-text-stroke:0.2px #222">E</div>
<div style="position:absolute;left:751.0px;top:206px;width:40px;text-align:center;font-size:12px;line-height:12px;color:#333;font-family:'Liberation Sans';-webkit-text-stroke:0.2px #333">F</div>
<div style="position:absolute;left:815.0px;top:206px;width:40px;text-align:center;font-size:12px;line-height:12px;color:#333;font-family:'Liberation Sans';-webkit-text-stroke:0.2px #333">G</div>
<div style="position:absolute;left:879.0px;top:206px;width:40px;text-align:center;font-size:12px;line-height:12px;color:#333;font-family:'Liberation Sans';-webkit-text-stroke:0.2px #333">H</div>
<div style="position:absolute;left:943.0px;top:206px;width:40px;text-align:center;font-size:12px;line-height:12px;color:#333;font-family:'Liberation Sans';-webkit-text-stroke:0.2px #333">I</div>
<div style="position:absolute;left:1007.0px;top:206px;width:40px;text-align:center;font-size:12px;line-height:12px;color:#333;font-family:'Liberation Sans';-webkit-text-stroke:0.2px #333">J</div>
<div style="position:absolute;left:1px;top:221px;width:22px;height:454px;background:#e6e6e6"></div>
<div style="position:absolute;left:1px;top:261px;width:22px;height:300px;background:#d3d3d3"></div>
<div style="position:absolute;left:23px;top:221px;width:1px;height:454px;background:#bdbdbd"></div>
<div style="position:absolute;left:22px;top:261px;width:2px;height:300px;background:#007242"></div>
<div style="position:absolute;left:1px;top:261px;width:22px;height:1px;background:#c8c8c8"></div>
<div style="position:absolute;left:1px;top:281px;width:22px;height:1px;background:#c8c8c8"></div>
<div style="position:absolute;left:1px;top:301px;width:22px;height:1px;background:#c8c8c8"></div>
<div style="position:absolute;left:1px;top:321px;width:22px;height:1px;background:#c8c8c8"></div>
<div style="position:absolute;left:1px;top:341px;width:22px;height:1px;background:#c8c8c8"></div>
<div style="position:absolute;left:1px;top:361px;width:22px;height:1px;background:#c8c8c8"></div>
<div style="position:absolute;left:1px;top:381px;width:22px;height:1px;background:#c8c8c8"></div>
<div style="position:absolute;left:1px;top:401px;width:22px;height:1px;background:#c8c8c8"></div>
<div style="position:absolute;left:1px;top:421px;width:22px;height:1px;background:#c8c8c8"></div>
<div style="position:absolute;left:1px;top:441px;width:22px;height:1px;background:#c8c8c8"></div>
<div style="position:absolute;left:1px;top:461px;width:22px;height:1px;background:#c8c8c8"></div>
<div style="position:absolute;left:1px;top:481px;width:22px;height:1px;background:#c8c8c8"></div>
<div style="position:absolute;left:1px;top:501px;width:22px;height:1px;background:#c8c8c8"></div>
<div style="position:absolute;left:1px;top:521px;width:22px;height:1px;background:#c8c8c8"></div>
<div style="position:absolute;left:1px;top:541px;width:22px;height:1px;background:#c8c8c8"></div>
<div style="position:absolute;left:1px;top:561px;width:22px;height:1px;background:#c8c8c8"></div>
<div style="position:absolute;left:1px;top:581px;width:22px;height:1px;background:#c8c8c8"></div>
<div style="position:absolute;left:1px;top:601px;width:22px;height:1px;background:#c8c8c8"></div>
<div style="position:absolute;left:1px;top:621px;width:22px;height:1px;background:#c8c8c8"></div>
<div style="position:absolute;left:1px;top:641px;width:22px;height:1px;background:#c8c8c8"></div>
<div style="position:absolute;left:1px;top:661px;width:22px;height:1px;background:#c8c8c8"></div>
<div style="position:absolute;left:0.5px;top:247px;width:22px;text-align:center;font-size:12.5px;line-height:12.5px;color:#262626;font-family:'Liberation Sans';-webkit-text-stroke:0.15px #262626">1</div>
<div style="position:absolute;left:0.5px;top:267px;width:22px;text-align:center;font-size:12.5px;line-height:12.5px;color:#007242;font-family:'Liberation Sans';-webkit-text-stroke:0.15px #007242">2</div>
<div style="position:absolute;left:0.5px;top:287px;width:22px;text-align:center;font-size:12.5px;line-height:12.5px;color:#007242;font-family:'Liberation Sans';-webkit-text-stroke:0.15px #007242">3</div>
<div style="position:absolute;left:0.5px;top:307px;width:22px;text-align:center;font-size:12.5px;line-height:12.5px;color:#007242;font-family:'Liberation Sans';-webkit-text-stroke:0.15px #007242">4</div>
<div style="position:absolute;left:0.5px;top:327px;width:22px;text-align:center;font-size:12.5px;line-height:12.5px;color:#007242;font-family:'Liberation Sans';-webkit-text-stroke:0.15px #007242">5</div>
<div style="position:absolute;left:0.5px;top:347px;width:22px;text-align:center;font-size:12.5px;line-height:12.5px;color:#007242;font-family:'Liberation Sans';-webkit-text-stroke:0.15px #007242">6</div>
<div style="position:absolute;left:0.5px;top:367px;width:22px;text-align:center;font-size:12.5px;line-height:12.5px;color:#007242;font-family:'Liberation Sans';-webkit-text-stroke:0.15px #007242">7</div>
<div style="position:absolute;left:0.5px;top:387px;width:22px;text-align:center;font-size:12.5px;line-height:12.5px;color:#007242;font-family:'Liberation Sans';-webkit-text-stroke:0.15px #007242">8</div>
<div style="position:absolute;left:0.5px;top:407px;width:22px;text-align:center;font-size:12.5px;line-height:12.5px;color:#007242;font-family:'Liberation Sans';-webkit-text-stroke:0.15px #007242">9</div>
<div style="position:absolute;left:0.5px;top:427px;width:22px;text-align:center;font-size:12.5px;line-height:12.5px;color:#007242;font-family:'Liberation Sans';-webkit-text-stroke:0.15px #007242">10</div>
<div style="position:absolute;left:0.5px;top:447px;width:22px;text-align:center;font-size:12.5px;line-height:12.5px;color:#007242;font-family:'Liberation Sans';-webkit-text-stroke:0.15px #007242">11</div>
<div style="position:absolute;left:0.5px;top:467px;width:22px;text-align:center;font-size:12.5px;line-height:12.5px;color:#007242;font-family:'Liberation Sans';-webkit-text-stroke:0.15px #007242">12</div>
<div style="position:absolute;left:0.5px;top:487px;width:22px;text-align:center;font-size:12.5px;line-height:12.5px;color:#007242;font-family:'Liberation Sans';-webkit-text-stroke:0.15px #007242">13</div>
<div style="position:absolute;left:0.5px;top:507px;width:22px;text-align:center;font-size:12.5px;line-height:12.5px;color:#007242;font-family:'Liberation Sans';-webkit-text-stroke:0.15px #007242">14</div>
<div style="position:absolute;left:0.5px;top:527px;width:22px;text-align:center;font-size:12.5px;line-height:12.5px;color:#007242;font-family:'Liberation Sans';-webkit-text-stroke:0.15px #007242">15</div>
<div style="position:absolute;left:0.5px;top:547px;width:22px;text-align:center;font-size:12.5px;line-height:12.5px;color:#007242;font-family:'Liberation Sans';-webkit-text-stroke:0.15px #007242">16</div>
<div style="position:absolute;left:0.5px;top:567px;width:22px;text-align:center;font-size:12.5px;line-height:12.5px;color:#262626;font-family:'Liberation Sans';-webkit-text-stroke:0.15px #262626">17</div>
<div style="position:absolute;left:0.5px;top:587px;width:22px;text-align:center;font-size:12.5px;line-height:12.5px;color:#262626;font-family:'Liberation Sans';-webkit-text-stroke:0.15px #262626">18</div>
<div style="position:absolute;left:0.5px;top:607px;width:22px;text-align:center;font-size:12.5px;line-height:12.5px;color:#262626;font-family:'Liberation Sans';-webkit-text-stroke:0.15px #262626">19</div>
<div style="position:absolute;left:0.5px;top:627px;width:22px;text-align:center;font-size:12.5px;line-height:12.5px;color:#262626;font-family:'Liberation Sans';-webkit-text-stroke:0.15px #262626">20</div>
<div style="position:absolute;left:0.5px;top:647px;width:22px;text-align:center;font-size:12.5px;line-height:12.5px;color:#262626;font-family:'Liberation Sans';-webkit-text-stroke:0.15px #262626">21</div>
<div style="position:absolute;left:0.5px;top:667px;width:22px;text-align:center;font-size:12.5px;line-height:12.5px;color:#262626;font-family:'Liberation Sans';-webkit-text-stroke:0.15px #262626">22</div>
<div style="position:absolute;left:134px;top:221px;width:1px;height:454px;background:#d9d9d9"></div>
<div style="position:absolute;left:287px;top:221px;width:1px;height:454px;background:#d9d9d9"></div>
<div style="position:absolute;left:440px;top:221px;width:1px;height:454px;background:#d9d9d9"></div>
<div style="position:absolute;left:589px;top:221px;width:1px;height:454px;background:#d9d9d9"></div>
<div style="position:absolute;left:739px;top:221px;width:1px;height:454px;background:#d9d9d9"></div>
<div style="position:absolute;left:803px;top:221px;width:1px;height:454px;background:#d9d9d9"></div>
<div style="position:absolute;left:867px;top:221px;width:1px;height:454px;background:#d9d9d9"></div>
<div style="position:absolute;left:931px;top:221px;width:1px;height:454px;background:#d9d9d9"></div>
<div style="position:absolute;left:995px;top:221px;width:1px;height:454px;background:#d9d9d9"></div>
<div style="position:absolute;left:1059px;top:221px;width:1px;height:454px;background:#d9d9d9"></div>
<div style="position:absolute;left:24px;top:261px;width:979px;height:1px;background:#d9d9d9"></div>
<div style="position:absolute;left:24px;top:281px;width:979px;height:1px;background:#d9d9d9"></div>
<div style="position:absolute;left:24px;top:301px;width:979px;height:1px;background:#d9d9d9"></div>
<div style="position:absolute;left:24px;top:321px;width:979px;height:1px;background:#d9d9d9"></div>
<div style="position:absolute;left:24px;top:341px;width:979px;height:1px;background:#d9d9d9"></div>
<div style="position:absolute;left:24px;top:361px;width:979px;height:1px;background:#d9d9d9"></div>
<div style="position:absolute;left:24px;top:381px;width:979px;height:1px;background:#d9d9d9"></div>
<div style="position:absolute;left:24px;top:401px;width:979px;height:1px;background:#d9d9d9"></div>
<div style="position:absolute;left:24px;top:421px;width:979px;height:1px;background:#d9d9d9"></div>
<div style="position:absolute;left:24px;top:441px;width:979px;height:1px;background:#d9d9d9"></div>
<div style="position:absolute;left:24px;top:461px;width:979px;height:1px;background:#d9d9d9"></div>
<div style="position:absolute;left:24px;top:481px;width:979px;height:1px;background:#d9d9d9"></div>
<div style="position:absolute;left:24px;top:501px;width:979px;height:1px;background:#d9d9d9"></div>
<div style="position:absolute;left:24px;top:521px;width:979px;height:1px;background:#d9d9d9"></div>
<div style="position:absolute;left:24px;top:541px;width:979px;height:1px;background:#d9d9d9"></div>
<div style="position:absolute;left:24px;top:561px;width:979px;height:1px;background:#d9d9d9"></div>
<div style="position:absolute;left:24px;top:581px;width:979px;height:1px;background:#d9d9d9"></div>
<div style="position:absolute;left:24px;top:601px;width:979px;height:1px;background:#d9d9d9"></div>
<div style="position:absolute;left:24px;top:621px;width:979px;height:1px;background:#d9d9d9"></div>
<div style="position:absolute;left:24px;top:641px;width:979px;height:1px;background:#d9d9d9"></div>
<div style="position:absolute;left:24px;top:661px;width:979px;height:1px;background:#d9d9d9"></div>
<div style="position:absolute;left:24px;top:222px;width:715px;height:39px;background:#6dcf48"></div>
<div style="position:absolute;left:24px;top:262px;width:110px;height:299px;background:#ffc000"></div>
<div style="position:absolute;left:135px;top:262px;width:604px;height:299px;background:#c6c6c6"></div>
<div style="position:absolute;left:135px;top:262px;width:152px;height:19px;background:#fff"></div>
<div style="position:absolute;left:23px;top:261px;width:717px;height:1px;background:#000"></div>
<div style="position:absolute;left:23px;top:281px;width:717px;height:1px;background:#000"></div>
<div style="position:absolute;left:23px;top:301px;width:717px;height:1px;background:#000"></div>
<div style="position:absolute;left:23px;top:321px;width:717px;height:1px;background:#000"></div>
<div style="position:absolute;left:23px;top:341px;width:717px;height:1px;background:#000"></div>
<div style="position:absolute;left:23px;top:361px;width:717px;height:1px;background:#000"></div>
<div style="position:absolute;left:23px;top:381px;width:717px;height:1px;background:#000"></div>
<div style="position:absolute;left:23px;top:401px;width:717px;height:1px;background:#000"></div>
<div style="position:absolute;left:23px;top:421px;width:717px;height:1px;background:#000"></div>
<div style="position:absolute;left:23px;top:441px;width:717px;height:1px;background:#000"></div>
<div style="position:absolute;left:23px;top:461px;width:717px;height:1px;background:#000"></div>
<div style="position:absolute;left:23px;top:481px;width:717px;height:1px;background:#000"></div>
<div style="position:absolute;left:23px;top:501px;width:717px;height:1px;background:#000"></div>
<div style="position:absolute;left:23px;top:521px;width:717px;height:1px;background:#000"></div>
<div style="position:absolute;left:23px;top:541px;width:717px;height:1px;background:#000"></div>
<div style="position:absolute;left:23px;top:561px;width:717px;height:1px;background:#000"></div>
<div style="position:absolute;left:134px;top:221px;width:1px;height:340px;background:#000"></div>
<div style="position:absolute;left:287px;top:221px;width:1px;height:340px;background:#000"></div>
<div style="position:absolute;left:440px;top:221px;width:1px;height:340px;background:#000"></div>
<div style="position:absolute;left:589px;top:221px;width:1px;height:340px;background:#000"></div>
<div style="position:absolute;left:739px;top:221px;width:1px;height:340px;background:#000"></div>
<div style="position:absolute;left:23px;top:261px;width:1px;height:300px;background:#000"></div>
<div style="position:absolute;left:24px;top:221px;width:110px;height:40px;overflow:hidden"><div style="position:absolute;left:2.4px;top:5px;font-family:'Liberation Sans',sans-serif;font-size:13.5px;line-height:13.5px;color:#000;white-space:pre;-webkit-text-stroke:0.2px #000">Торговая точка/</div><div style="position:absolute;left:2.4px;top:25px;font-family:'Liberation Sans',sans-serif;font-size:13.5px;line-height:13.5px;color:#000;white-space:pre;-webkit-text-stroke:0.2px #000">Дата</div></div>
<div style="position:absolute;left:135px;top:221px;width:152px;height:40px;overflow:hidden"><div style="position:absolute;left:2.5px;top:5px;font-family:'Liberation Sans',sans-serif;font-size:13.7px;line-height:13.7px;color:#000;white-space:pre;-webkit-text-stroke:0.2px #000">Продажи по Торговой</div><div style="position:absolute;left:2.5px;top:25px;font-family:'Liberation Sans',sans-serif;font-size:13.7px;line-height:13.7px;color:#000;white-space:pre;-webkit-text-stroke:0.2px #000">точке 1, тыс. руб.</div></div>
<div style="position:absolute;left:288px;top:221px;width:152px;height:40px;overflow:hidden"><div style="position:absolute;left:2.5px;top:5px;font-family:'Liberation Sans',sans-serif;font-size:13.7px;line-height:13.7px;color:#000;white-space:pre;-webkit-text-stroke:0.2px #000">Продажи по Торговой</div><div style="position:absolute;left:2.5px;top:25px;font-family:'Liberation Sans',sans-serif;font-size:13.7px;line-height:13.7px;color:#000;white-space:pre;-webkit-text-stroke:0.2px #000">точке 2, тыс. руб.</div></div>
<div style="position:absolute;left:441px;top:221px;width:148px;height:40px;overflow:hidden"><div style="position:absolute;left:2.5px;top:5px;font-family:'Liberation Sans',sans-serif;font-size:13.7px;line-height:13.7px;color:#000;white-space:pre;-webkit-text-stroke:0.2px #000">Продажи по Торговой</div><div style="position:absolute;left:2.5px;top:25px;font-family:'Liberation Sans',sans-serif;font-size:13.7px;line-height:13.7px;color:#000;white-space:pre;-webkit-text-stroke:0.2px #000">точке 3, тыс. руб.</div></div>
<div style="position:absolute;left:590px;top:221px;width:149px;height:40px;overflow:hidden"><div style="position:absolute;left:2.5px;top:5px;font-family:'Liberation Sans',sans-serif;font-size:13.7px;line-height:13.7px;color:#000;white-space:pre;-webkit-text-stroke:0.2px #000">Продажи по Торговой</div><div style="position:absolute;left:2.5px;top:25px;font-family:'Liberation Sans',sans-serif;font-size:13.7px;line-height:13.7px;color:#000;white-space:pre;-webkit-text-stroke:0.2px #000">точке 4, тыс. руб.</div></div>
<div style="position:absolute;left:24px;top:262px;width:110px;height:19px;overflow:hidden"><div style="position:absolute;right:1px;top:4.20px;font-family:'Liberation Sans',sans-serif;font-size:13px;line-height:13px;color:#000;white-space:pre;-webkit-text-stroke:0.2px #000">01.06.2019</div></div>
<div style="position:absolute;left:137.3px;top:267px;font-family:'Liberation Sans',sans-serif;font-size:12.4px;line-height:12.4px;color:#000;white-space:pre;-webkit-text-stroke:0.2px #000">25.223</div>
<div style="position:absolute;left:290.3px;top:267px;font-family:'Liberation Sans',sans-serif;font-size:12.4px;line-height:12.4px;color:#000;white-space:pre;-webkit-text-stroke:0.2px #000">33.224</div>
<div style="position:absolute;left:443.3px;top:267px;font-family:'Liberation Sans',sans-serif;font-size:12.4px;line-height:12.4px;color:#000;white-space:pre;-webkit-text-stroke:0.2px #000">14.557</div>
<div style="position:absolute;left:592.3px;top:267px;font-family:'Liberation Sans',sans-serif;font-size:12.4px;line-height:12.4px;color:#000;white-space:pre;-webkit-text-stroke:0.2px #000">24.334</div>
<div style="position:absolute;left:24px;top:282px;width:110px;height:19px;overflow:hidden"><div style="position:absolute;right:1px;top:4.20px;font-family:'Liberation Sans',sans-serif;font-size:13px;line-height:13px;color:#000;white-space:pre;-webkit-text-stroke:0.2px #000">02.06.2019</div></div>
<div style="position:absolute;left:137.3px;top:287px;font-family:'Liberation Sans',sans-serif;font-size:12.4px;line-height:12.4px;color:#000;white-space:pre;-webkit-text-stroke:0.2px #000">25.475</div>
<div style="position:absolute;left:290.3px;top:287px;font-family:'Liberation Sans',sans-serif;font-size:12.4px;line-height:12.4px;color:#000;white-space:pre;-webkit-text-stroke:0.2px #000">33.722</div>
<div style="position:absolute;left:443.3px;top:287px;font-family:'Liberation Sans',sans-serif;font-size:12.4px;line-height:12.4px;color:#000;white-space:pre;-webkit-text-stroke:0.2px #000">14.673</div>
<div style="position:absolute;left:592.3px;top:287px;font-family:'Liberation Sans',sans-serif;font-size:12.4px;line-height:12.4px;color:#000;white-space:pre;-webkit-text-stroke:0.2px #000">24.456</div>
<div style="position:absolute;left:24px;top:302px;width:110px;height:19px;overflow:hidden"><div style="position:absolute;right:1px;top:4.20px;font-family:'Liberation Sans',sans-serif;font-size:13px;line-height:13px;color:#000;white-space:pre;-webkit-text-stroke:0.2px #000">03.06.2019</div></div>
<div style="position:absolute;left:137.3px;top:307px;font-family:'Liberation Sans',sans-serif;font-size:12.4px;line-height:12.4px;color:#000;white-space:pre;-webkit-text-stroke:0.2px #000">25.73</div>
<div style="position:absolute;left:290.3px;top:307px;font-family:'Liberation Sans',sans-serif;font-size:12.4px;line-height:12.4px;color:#000;white-space:pre;-webkit-text-stroke:0.2px #000">34.228</div>
<div style="position:absolute;left:443.3px;top:307px;font-family:'Liberation Sans',sans-serif;font-size:12.4px;line-height:12.4px;color:#000;white-space:pre;-webkit-text-stroke:0.2px #000">14.791</div>
<div style="position:absolute;left:592.3px;top:307px;font-family:'Liberation Sans',sans-serif;font-size:12.4px;line-height:12.4px;color:#000;white-space:pre;-webkit-text-stroke:0.2px #000">24.578</div>
<div style="position:absolute;left:24px;top:322px;width:110px;height:19px;overflow:hidden"><div style="position:absolute;right:1px;top:4.20px;font-family:'Liberation Sans',sans-serif;font-size:13px;line-height:13px;color:#000;white-space:pre;-webkit-text-stroke:0.2px #000">04.06.2019</div></div>
<div style="position:absolute;left:137.3px;top:327px;font-family:'Liberation Sans',sans-serif;font-size:12.4px;line-height:12.4px;color:#000;white-space:pre;-webkit-text-stroke:0.2px #000">25.987</div>
<div style="position:absolute;left:290.3px;top:327px;font-family:'Liberation Sans',sans-serif;font-size:12.4px;line-height:12.4px;color:#000;white-space:pre;-webkit-text-stroke:0.2px #000">34.742</div>
<div style="position:absolute;left:443.3px;top:327px;font-family:'Liberation Sans',sans-serif;font-size:12.4px;line-height:12.4px;color:#000;white-space:pre;-webkit-text-stroke:0.2px #000">14.909</div>
<div style="position:absolute;left:592.3px;top:327px;font-family:'Liberation Sans',sans-serif;font-size:12.4px;line-height:12.4px;color:#000;white-space:pre;-webkit-text-stroke:0.2px #000">24.701</div>
<div style="position:absolute;left:24px;top:342px;width:110px;height:19px;overflow:hidden"><div style="position:absolute;right:1px;top:4.20px;font-family:'Liberation Sans',sans-serif;font-size:13px;line-height:13px;color:#000;white-space:pre;-webkit-text-stroke:0.2px #000">05.06.2019</div></div>
<div style="position:absolute;left:137.3px;top:347px;font-family:'Liberation Sans',sans-serif;font-size:12.4px;line-height:12.4px;color:#000;white-space:pre;-webkit-text-stroke:0.2px #000">26.247</div>
<div style="position:absolute;left:290.3px;top:347px;font-family:'Liberation Sans',sans-serif;font-size:12.4px;line-height:12.4px;color:#000;white-space:pre;-webkit-text-stroke:0.2px #000">35.263</div>
<div style="position:absolute;left:443.3px;top:347px;font-family:'Liberation Sans',sans-serif;font-size:12.4px;line-height:12.4px;color:#000;white-space:pre;-webkit-text-stroke:0.2px #000">15.028</div>
<div style="position:absolute;left:592.3px;top:347px;font-family:'Liberation Sans',sans-serif;font-size:12.4px;line-height:12.4px;color:#000;white-space:pre;-webkit-text-stroke:0.2px #000">24.824</div>
<div style="position:absolute;left:24px;top:362px;width:110px;height:19px;overflow:hidden"><div style="position:absolute;right:1px;top:4.20px;font-family:'Liberation Sans',sans-serif;font-size:13px;line-height:13px;color:#000;white-space:pre;-webkit-text-stroke:0.2px #000">06.06.2019</div></div>
<div style="position:absolute;left:137.3px;top:367px;font-family:'Liberation Sans',sans-serif;font-size:12.4px;line-height:12.4px;color:#000;white-space:pre;-webkit-text-stroke:0.2px #000">26.51</div>
<div style="position:absolute;left:290.3px;top:367px;font-family:'Liberation Sans',sans-serif;font-size:12.4px;line-height:12.4px;color:#000;white-space:pre;-webkit-text-stroke:0.2px #000">35.792</div>
<div style="position:absolute;left:443.3px;top:367px;font-family:'Liberation Sans',sans-serif;font-size:12.4px;line-height:12.4px;color:#000;white-space:pre;-webkit-text-stroke:0.2px #000">15.149</div>
<div style="position:absolute;left:592.3px;top:367px;font-family:'Liberation Sans',sans-serif;font-size:12.4px;line-height:12.4px;color:#000;white-space:pre;-webkit-text-stroke:0.2px #000">24.948</div>
<div style="position:absolute;left:24px;top:382px;width:110px;height:19px;overflow:hidden"><div style="position:absolute;right:1px;top:4.20px;font-family:'Liberation Sans',sans-serif;font-size:13px;line-height:13px;color:#000;white-space:pre;-webkit-text-stroke:0.2px #000">07.06.2019</div></div>
<div style="position:absolute;left:137.3px;top:387px;font-family:'Liberation Sans',sans-serif;font-size:12.4px;line-height:12.4px;color:#000;white-space:pre;-webkit-text-stroke:0.2px #000">26.775</div>
<div style="position:absolute;left:290.3px;top:387px;font-family:'Liberation Sans',sans-serif;font-size:12.4px;line-height:12.4px;color:#000;white-space:pre;-webkit-text-stroke:0.2px #000">36.329</div>
<div style="position:absolute;left:443.3px;top:387px;font-family:'Liberation Sans',sans-serif;font-size:12.4px;line-height:12.4px;color:#000;white-space:pre;-webkit-text-stroke:0.2px #000">15.27</div>
<div style="position:absolute;left:592.3px;top:387px;font-family:'Liberation Sans',sans-serif;font-size:12.4px;line-height:12.4px;color:#000;white-space:pre;-webkit-text-stroke:0.2px #000">25.073</div>
<div style="position:absolute;left:24px;top:402px;width:110px;height:19px;overflow:hidden"><div style="position:absolute;right:1px;top:4.20px;font-family:'Liberation Sans',sans-serif;font-size:13px;line-height:13px;color:#000;white-space:pre;-webkit-text-stroke:0.2px #000">08.06.2019</div></div>
<div style="position:absolute;left:137.3px;top:407px;font-family:'Liberation Sans',sans-serif;font-size:12.4px;line-height:12.4px;color:#000;white-space:pre;-webkit-text-stroke:0.2px #000">27.042</div>
<div style="position:absolute;left:290.3px;top:407px;font-family:'Liberation Sans',sans-serif;font-size:12.4px;line-height:12.4px;color:#000;white-space:pre;-webkit-text-stroke:0.2px #000">36.873</div>
<div style="position:absolute;left:443.3px;top:407px;font-family:'Liberation Sans',sans-serif;font-size:12.4px;line-height:12.4px;color:#000;white-space:pre;-webkit-text-stroke:0.2px #000">15.392</div>
<div style="position:absolute;left:592.3px;top:407px;font-family:'Liberation Sans',sans-serif;font-size:12.4px;line-height:12.4px;color:#000;white-space:pre;-webkit-text-stroke:0.2px #000">25.199</div>
<div style="position:absolute;left:24px;top:422px;width:110px;height:19px;overflow:hidden"><div style="position:absolute;right:1px;top:4.20px;font-family:'Liberation Sans',sans-serif;font-size:13px;line-height:13px;color:#000;white-space:pre;-webkit-text-stroke:0.2px #000">09.06.2019</div></div>
<div style="position:absolute;left:137.3px;top:427px;font-family:'Liberation Sans',sans-serif;font-size:12.4px;line-height:12.4px;color:#000;white-space:pre;-webkit-text-stroke:0.2px #000">27.313</div>
<div style="position:absolute;left:290.3px;top:427px;font-family:'Liberation Sans',sans-serif;font-size:12.4px;line-height:12.4px;color:#000;white-space:pre;-webkit-text-stroke:0.2px #000">37.427</div>
<div style="position:absolute;left:443.3px;top:427px;font-family:'Liberation Sans',sans-serif;font-size:12.4px;line-height:12.4px;color:#000;white-space:pre;-webkit-text-stroke:0.2px #000">15.515</div>
<div style="position:absolute;left:592.3px;top:427px;font-family:'Liberation Sans',sans-serif;font-size:12.4px;line-height:12.4px;color:#000;white-space:pre;-webkit-text-stroke:0.2px #000">25.325</div>
<div style="position:absolute;left:24px;top:442px;width:110px;height:19px;overflow:hidden"><div style="position:absolute;right:1px;top:4.20px;font-family:'Liberation Sans',sans-serif;font-size:13px;line-height:13px;color:#000;white-space:pre;-webkit-text-stroke:0.2px #000">10.06.2019</div></div>
<div style="position:absolute;left:137.3px;top:447px;font-family:'Liberation Sans',sans-serif;font-size:12.4px;line-height:12.4px;color:#000;white-space:pre;-webkit-text-stroke:0.2px #000">27.586</div>
<div style="position:absolute;left:290.3px;top:447px;font-family:'Liberation Sans',sans-serif;font-size:12.4px;line-height:12.4px;color:#000;white-space:pre;-webkit-text-stroke:0.2px #000">37.988</div>
<div style="position:absolute;left:443.3px;top:447px;font-family:'Liberation Sans',sans-serif;font-size:12.4px;line-height:12.4px;color:#000;white-space:pre;-webkit-text-stroke:0.2px #000">15.639</div>
<div style="position:absolute;left:592.3px;top:447px;font-family:'Liberation Sans',sans-serif;font-size:12.4px;line-height:12.4px;color:#000;white-space:pre;-webkit-text-stroke:0.2px #000">25.451</div>
<div style="position:absolute;left:24px;top:462px;width:110px;height:19px;overflow:hidden"><div style="position:absolute;right:1px;top:4.20px;font-family:'Liberation Sans',sans-serif;font-size:13px;line-height:13px;color:#000;white-space:pre;-webkit-text-stroke:0.2px #000">11.06.2019</div></div>
<div style="position:absolute;left:137.3px;top:467px;font-family:'Liberation Sans',sans-serif;font-size:12.4px;line-height:12.4px;color:#000;white-space:pre;-webkit-text-stroke:0.2px #000">27.862</div>
<div style="position:absolute;left:290.3px;top:467px;font-family:'Liberation Sans',sans-serif;font-size:12.4px;line-height:12.4px;color:#000;white-space:pre;-webkit-text-stroke:0.2px #000">38.558</div>
<div style="position:absolute;left:443.3px;top:467px;font-family:'Liberation Sans',sans-serif;font-size:12.4px;line-height:12.4px;color:#000;white-space:pre;-webkit-text-stroke:0.2px #000">15.764</div>
<div style="position:absolute;left:592.3px;top:467px;font-family:'Liberation Sans',sans-serif;font-size:12.4px;line-height:12.4px;color:#000;white-space:pre;-webkit-text-stroke:0.2px #000">25.578</div>
<div style="position:absolute;left:24px;top:482px;width:110px;height:19px;overflow:hidden"><div style="position:absolute;right:1px;top:4.20px;font-family:'Liberation Sans',sans-serif;font-size:13px;line-height:13px;color:#000;white-space:pre;-webkit-text-stroke:0.2px #000">12.06.2019</div></div>
<div style="position:absolute;left:137.3px;top:487px;font-family:'Liberation Sans',sans-serif;font-size:12.4px;line-height:12.4px;color:#000;white-space:pre;-webkit-text-stroke:0.2px #000">28.141</div>
<div style="position:absolute;left:290.3px;top:487px;font-family:'Liberation Sans',sans-serif;font-size:12.4px;line-height:12.4px;color:#000;white-space:pre;-webkit-text-stroke:0.2px #000">39.136</div>
<div style="position:absolute;left:443.3px;top:487px;font-family:'Liberation Sans',sans-serif;font-size:12.4px;line-height:12.4px;color:#000;white-space:pre;-webkit-text-stroke:0.2px #000">15.891</div>
<div style="position:absolute;left:592.3px;top:487px;font-family:'Liberation Sans',sans-serif;font-size:12.4px;line-height:12.4px;color:#000;white-space:pre;-webkit-text-stroke:0.2px #000">25.706</div>
<div style="position:absolute;left:24px;top:502px;width:110px;height:19px;overflow:hidden"><div style="position:absolute;right:1px;top:4.20px;font-family:'Liberation Sans',sans-serif;font-size:13px;line-height:13px;color:#000;white-space:pre;-webkit-text-stroke:0.2px #000">13.06.2019</div></div>
<div style="position:absolute;left:137.3px;top:507px;font-family:'Liberation Sans',sans-serif;font-size:12.4px;line-height:12.4px;color:#000;white-space:pre;-webkit-text-stroke:0.2px #000">28.422</div>
<div style="position:absolute;left:290.3px;top:507px;font-family:'Liberation Sans',sans-serif;font-size:12.4px;line-height:12.4px;color:#000;white-space:pre;-webkit-text-stroke:0.2px #000">39.723</div>
<div style="position:absolute;left:443.3px;top:507px;font-family:'Liberation Sans',sans-serif;font-size:12.4px;line-height:12.4px;color:#000;white-space:pre;-webkit-text-stroke:0.2px #000">16.018</div>
<div style="position:absolute;left:592.3px;top:507px;font-family:'Liberation Sans',sans-serif;font-size:12.4px;line-height:12.4px;color:#000;white-space:pre;-webkit-text-stroke:0.2px #000">25.835</div>
<div style="position:absolute;left:24px;top:522px;width:110px;height:19px;overflow:hidden"><div style="position:absolute;right:1px;top:4.20px;font-family:'Liberation Sans',sans-serif;font-size:13px;line-height:13px;color:#000;white-space:pre;-webkit-text-stroke:0.2px #000">14.06.2019</div></div>
<div style="position:absolute;left:137.3px;top:527px;font-family:'Liberation Sans',sans-serif;font-size:12.4px;line-height:12.4px;color:#000;white-space:pre;-webkit-text-stroke:0.2px #000">28.706</div>
<div style="position:absolute;left:290.3px;top:527px;font-family:'Liberation Sans',sans-serif;font-size:12.4px;line-height:12.4px;color:#000;white-space:pre;-webkit-text-stroke:0.2px #000">40.319</div>
<div style="position:absolute;left:443.3px;top:527px;font-family:'Liberation Sans',sans-serif;font-size:12.4px;line-height:12.4px;color:#000;white-space:pre;-webkit-text-stroke:0.2px #000">16.146</div>
<div style="position:absolute;left:592.3px;top:527px;font-family:'Liberation Sans',sans-serif;font-size:12.4px;line-height:12.4px;color:#000;white-space:pre;-webkit-text-stroke:0.2px #000">25.964</div>
<div style="position:absolute;left:24px;top:542px;width:110px;height:19px;overflow:hidden"><div style="position:absolute;right:1px;top:4.20px;font-family:'Liberation Sans',sans-serif;font-size:13px;line-height:13px;color:#000;white-space:pre;-webkit-text-stroke:0.2px #000">15.06.2019</div></div>
<div style="position:absolute;left:137.3px;top:547px;font-family:'Liberation Sans',sans-serif;font-size:12.4px;line-height:12.4px;color:#000;white-space:pre;-webkit-text-stroke:0.2px #000">28.993</div>
<div style="position:absolute;left:290.3px;top:547px;font-family:'Liberation Sans',sans-serif;font-size:12.4px;line-height:12.4px;color:#000;white-space:pre;-webkit-text-stroke:0.2px #000">40.924</div>
<div style="position:absolute;left:443.3px;top:547px;font-family:'Liberation Sans',sans-serif;font-size:12.4px;line-height:12.4px;color:#000;white-space:pre;-webkit-text-stroke:0.2px #000">16.275</div>
<div style="position:absolute;left:592.3px;top:547px;font-family:'Liberation Sans',sans-serif;font-size:12.4px;line-height:12.4px;color:#000;white-space:pre;-webkit-text-stroke:0.2px #000">26.094</div>
<div style="position:absolute;left:135px;top:262px;width:604px;height:299px;border:1px solid #fff;box-sizing:border-box"></div>
<div style="position:absolute;left:133px;top:260px;width:608px;height:303px;border:2px solid #007242;box-sizing:border-box"></div>
<div style="position:absolute;left:737px;top:559px;width:6px;height:6px;background:#007242;border:1px solid #fff;box-sizing:content-box;margin:-1px"></div>
<div style="position:absolute;left:1002px;top:202px;width:1px;height:473px;background:#9a9a9a"></div>
<div style="position:absolute;left:1003px;top:202px;width:18px;height:473px;background:#e6e6e6"></div>
<div style="position:absolute;left:1006px;top:216px;width:14px;height:422px;background:#fff;border-left:1px solid #c0c6c6;border-bottom:1px solid #c6c6c6;box-sizing:border-box"></div>
<div style="position:absolute;left:1006px;top:638px;width:14px;height:23px;background:#dcdcdc"></div>
<div style="position:absolute;left:1006px;top:661px;width:14px;height:14px;background:#fff;border:1px solid #c6c6c6;box-sizing:border-box"></div>
<svg style="position:absolute;left:1009px;top:666px;" width="8" height="5" viewBox="0 0 8 5"><path d="M0 0h7.5l-3.75 4z" fill="#6a6a6a"/></svg>
<div style="position:absolute;left:1006px;top:202px;width:14px;height:14px;background:#fff;border:1px solid #c6c6c6;box-sizing:border-box"></div>
<div style="position:absolute;left:1px;top:674.5px;width:1002px;height:1px;background:#9a9a9a"></div>
<div style="position:absolute;left:1px;top:675px;width:1020px;height:28px;background:#e6e6e6"></div>
<div style="position:absolute;left:1px;top:703px;width:1020px;height:1px;background:#c6c6c6"></div>
<svg style="position:absolute;left:26px;top:685px;" width="5" height="8" viewBox="0 0 5 8"><path d="M4.5 0.5v7L0.5 4z" fill="#c0c0c0"/></svg>
<svg style="position:absolute;left:54px;top:685px;" width="5" height="8" viewBox="0 0 5 8"><path d="M0.5 0.5v7L4.5 4z" fill="#c0c0c0"/></svg>
<div style="position:absolute;left:98px;top:675px;width:107px;height:24px;background:#fff;border-left:1px solid #b8b8b8;border-right:1px solid #b8b8b8;box-sizing:border-box"></div>
<div style="position:absolute;left:98px;top:698px;width:107px;height:2.5px;background:#007242"></div>
<div style="position:absolute;left:110.3px;top:682px;font-family:'Liberation Sans',sans-serif;font-size:12px;line-height:12px;letter-spacing:0.366px;font-weight:700;color:#007242;white-space:pre;">microexcel.ru</div>
<svg style="position:absolute;left:238px;top:681px;" width="16" height="16" viewBox="0 0 16 16"><circle cx="8" cy="8" r="7.3" fill="none" stroke="#666" stroke-width="1.1"/><path d="M8 3.8v8.4M3.8 8h8.4" stroke="#666" stroke-width="1.6"/></svg>
<div style="position:absolute;left:613px;top:685px;width:2px;height:2px;background:#a6a6a6"></div>
<div style="position:absolute;left:613px;top:689px;width:2px;height:2px;background:#a6a6a6"></div>
<div style="position:absolute;left:613px;top:693px;width:2px;height:2px;background:#a6a6a6"></div>
<div style="position:absolute;left:630px;top:682px;width:15px;height:15px;background:#fff;border:1px solid #c6c6c6;box-sizing:border-box"></div>
<svg style="position:absolute;left:635px;top:686px;" width="5" height="8" viewBox="0 0 5 8"><path d="M4.5 0.5v7L0.5 4z" fill="#666"/></svg>
<div style="position:absolute;left:644px;top:682px;width:305px;height:15px;background:#fff;border:1px solid #c6c6c6;box-sizing:border-box"></div>
<div style="position:absolute;left:949px;top:683px;width:39px;height:13px;background:#dcdcdc"></div>
<div style="position:absolute;left:988px;top:682px;width:15px;height:15px;background:#fff;border:1px solid #c6c6c6;box-sizing:border-box"></div>
<svg style="position:absolute;left:993px;top:686px;" width="5" height="8" viewBox="0 0 5 8"><path d="M0.5 0.5v7L4.5 4z" fill="#666"/></svg>
<div style="position:absolute;left:1px;top:704px;width:1020px;height:19px;background:#f3f3f3"></div>
<svg style="position:absolute;left:5px;top:706px;" width="14" height="15" viewBox="0 0 14 15"><rect x="1.5" y="2.5" width="11.5" height="11" fill="#fff" stroke="#555"/><rect x="1" y="2" width="12.5" height="2" fill="#555"/><path d="M3.5 7h2M7 7h2M10.5 7h1.5M3.5 9.5h2M7 9.5h2M10.5 9.5h1.5M3.5 12h2M7 12h2M10.5 12h1.5" stroke="#555"/><circle cx="3.7" cy="3.3" r="2.6" fill="#555"/></svg>
<div style="position:absolute;left:626.4px;top:707px;font-family:'Liberation Sans',sans-serif;font-size:11.3px;line-height:11.3px;letter-spacing:-0.016px;font-weight:400;color:#333;white-space:pre;">Количество: 60</div>
<div style="position:absolute;left:724px;top:704px;width:38px;height:19px;background:#c8c8c8"></div>
<svg style="position:absolute;left:736px;top:707px;" width="13" height="13" viewBox="0 0 13 13"><rect x="0.5" y="0.5" width="12" height="12" fill="none" stroke="#555"/><path d="M4.5 0.5v12M8.5 0.5v12M0.5 4.5h12M0.5 8.5h12" stroke="#555"/></svg>
<svg style="position:absolute;left:774px;top:707px;" width="14" height="13" viewBox="0 0 14 13"><rect x="0.5" y="0.5" width="13" height="12" fill="none" stroke="#555"/><rect x="3.5" y="3" width="7" height="7" fill="none" stroke="#555"/><path d="M5 5h4M5 7h4" stroke="#555"/></svg>
<svg style="position:absolute;left:812px;top:707px;" width="14" height="13" viewBox="0 0 14 13"><path d="M0.5 12.5V0.5h13v12z" fill="none" stroke="#555"/><path d="M0.5 7.5h7V0.5M4 0.5v7" fill="none" stroke="#555"/></svg>
<div style="position:absolute;left:843px;top:713px;width:6px;height:2px;background:#555"></div>
<div style="position:absolute;left:853px;top:713.5px;width:100px;height:1px;background:#9a9a9a"></div>
<div style="position:absolute;left:901px;top:708px;width:5px;height:11px;background:#6a6a6a"></div>
<svg style="position:absolute;left:956px;top:710px;" width="8" height="8" viewBox="0 0 8 8"><path d="M4 0v8M0 4h8" stroke="#555" stroke-width="1.6"/></svg>
<div style="position:absolute;left:975.5px;top:707px;font-family:'Liberation Sans',sans-serif;font-size:11.3px;line-height:11.3px;letter-spacing:-0.588px;font-weight:400;color:#333;white-space:pre;">100 %</div>
<div style="position:absolute;left:0px;top:0px;width:1px;height:725px;background:#007242"></div>
<div style="position:absolute;left:1021px;top:0px;width:1px;height:725px;background:#007242"></div>
<div style="position:absolute;left:1020px;top:0px;width:1px;height:725px;background:rgba(0,114,66,0.45)"></div>
<div style="position:absolute;left:0px;top:723px;width:1022px;height:2px;background:#007242"></div>
<div style="position:absolute;left:129px;top:257px;width:617px;height:311px;border:3.3px solid #f00;border-radius:8px;box-sizing:border-box"></div>
<div style="position:absolute;left:806px;top:111px;width:215px;height:275px;background:rgba(0,0,0,0.06);filter:blur(1.5px)"></div>
<div style="position:absolute;left:808px;top:112px;width:211px;height:272px;background:#fff;border:1px solid #c6c6c6;box-sizing:border-box"></div>
<div style="position:absolute;left:810px;top:138px;width:207px;height:26px;background:#c6c6c6"></div>
<div style="position:absolute;left:842.5px;top:120px;font-family:'Liberation Sans',sans-serif;font-size:12px;line-height:12px;letter-spacing:-0.143px;font-weight:400;color:#3a3a3a;white-space:pre;">Найти...</div>
<div style="position:absolute;left:842px;top:131px;width:9px;height:1px;background:#555"></div>
<div style="position:absolute;left:842.5px;top:144px;font-family:'Liberation Sans',sans-serif;font-size:12px;line-height:12px;letter-spacing:-0.239px;font-weight:400;color:#3a3a3a;white-space:pre;">Заменить...</div>
<div style="position:absolute;left:842px;top:155px;width:7px;height:1px;background:#555"></div>
<div style="position:absolute;left:842.5px;top:168px;font-family:'Liberation Sans',sans-serif;font-size:12px;line-height:12px;letter-spacing:-0.195px;font-weight:400;color:#3a3a3a;white-space:pre;">Перейти...</div>
<div style="position:absolute;left:872px;top:179px;width:5px;height:1px;background:#555"></div>
<div style="position:absolute;left:842.5px;top:192px;font-family:'Liberation Sans',sans-serif;font-size:12px;line-height:12px;letter-spacing:-0.129px;font-weight:400;color:#3a3a3a;white-space:pre;">Выделить группу ячеек...</div>
<div style="position:absolute;left:898px;top:203px;width:5px;height:1px;background:#555"></div>
<div style="position:absolute;left:842.5px;top:218px;font-family:'Liberation Sans',sans-serif;font-size:12px;line-height:12px;letter-spacing:0.226px;font-weight:400;color:#3a3a3a;white-space:pre;">Формулы</div>
<div style="position:absolute;left:842px;top:229px;width:9px;height:1px;background:#555"></div>
<div style="position:absolute;left:842.5px;top:242px;font-family:'Liberation Sans',sans-serif;font-size:12px;line-height:12px;letter-spacing:0.112px;font-weight:400;color:#3a3a3a;white-space:pre;">Примечания</div>
<div style="position:absolute;left:860px;top:253px;width:14px;height:1px;background:#555"></div>
<div style="position:absolute;left:842.5px;top:266px;font-family:'Liberation Sans',sans-serif;font-size:12px;line-height:12px;letter-spacing:-0.042px;font-weight:400;color:#3a3a3a;white-space:pre;">Условное форматирование</div>
<div style="position:absolute;left:842px;top:277px;width:8px;height:1px;background:#555"></div>
<div style="position:absolute;left:842.5px;top:290px;font-family:'Liberation Sans',sans-serif;font-size:12px;line-height:12px;letter-spacing:-0.064px;font-weight:400;color:#3a3a3a;white-space:pre;">Константы</div>
<div style="position:absolute;left:842px;top:301px;width:7px;height:1px;background:#555"></div>
<div style="position:absolute;left:842.5px;top:314px;font-family:'Liberation Sans',sans-serif;font-size:12px;line-height:12px;letter-spacing:-0.136px;font-weight:400;color:#3a3a3a;white-space:pre;">Проверка данных</div>
<div style="position:absolute;left:864px;top:325px;width:7px;height:1px;background:#555"></div>
<div style="position:absolute;left:842.5px;top:340px;font-family:'Liberation Sans',sans-serif;font-size:12px;line-height:12px;letter-spacing:-0.057px;font-weight:400;color:#3a3a3a;white-space:pre;">Выбор объектов</div>
<div style="position:absolute;left:882px;top:351px;width:6px;height:1px;background:#555"></div>
<div style="position:absolute;left:842.5px;top:364px;font-family:'Liberation Sans',sans-serif;font-size:12px;line-height:12px;letter-spacing:-0.251px;font-weight:400;color:#3a3a3a;white-space:pre;">Область выделения...</div>
<div style="position:absolute;left:849px;top:375px;width:8px;height:1px;background:#555"></div>
<div style="position:absolute;left:842px;top:210px;width:175px;height:1px;background:#e1e1e1"></div>
<div style="position:absolute;left:842px;top:332px;width:175px;height:1px;background:#e1e1e1"></div>
<svg style="position:absolute;left:815px;top:120px;" width="14" height="12" viewBox="0 0 14 12"><circle cx="9" cy="4.8" r="3.8" fill="none" stroke="#1e8bcd" stroke-width="1.7"/><path d="M6.3 7.6L1.2 12" stroke="#1e8bcd" stroke-width="2.4"/></svg>
<div style="position:absolute;left:814px;top:140px;font-family:'Liberation Sans';font-size:11px;line-height:11px;color:#555">ab</div>
<div style="position:absolute;left:818px;top:147.5px;font-family:'Liberation Sans';font-size:11px;line-height:11px;color:#555">a<span style="color:#1e8bcd">c</span></div>
<svg style="position:absolute;left:813px;top:150px;" width="5" height="5" viewBox="0 0 5 5"><path d="M4 0v3H1M2.2 1.5L0.8 3 2.2 4.5" fill="none" stroke="#1e8bcd" stroke-width="1"/></svg>
<svg style="position:absolute;left:816px;top:171px;" width="12" height="8" viewBox="0 0 12 8"><path d="M0 4h9.5M6.5 0.8L10 4 6.5 7.2" fill="none" stroke="#1e8bcd" stroke-width="2"/></svg>
<svg style="position:absolute;left:817px;top:337px;" width="11" height="17" viewBox="0 0 11 17"><path d="M1.5 1.5v11.5l2.8-2.6 2.3 4.8 1.9-0.9-2.2-4.6h3.9z" fill="#fff" stroke="#555" stroke-width="1.1" stroke-linejoin="round"/></svg>
<svg style="position:absolute;left:813px;top:361px;" width="18" height="18" viewBox="0 0 18 18"><path d="M7.5 1.5H1.5v5.5h6" fill="none" stroke="#555" stroke-width="1.1"/><rect x="1.5" y="10.5" width="6" height="6" fill="none" stroke="#555" stroke-width="1.1"/><path d="M7.5 3.5h5.5v5" fill="none" stroke="#f5b050" stroke-width="1.3" stroke-dasharray="1.3 0.7"/><path d="M10.5 5v10l2.3-2.2 1.8 3.6 1.5-0.7-1.8-3.6h3z" fill="#fff" stroke="#555" stroke-width="1" stroke-linejoin="round"/></svg>
<div style="position:absolute;left:809px;top:136px;width:209px;height:28.8px;border:3.3px solid #f00;border-radius:10px;box-sizing:border-box"></div>
</body></html>
